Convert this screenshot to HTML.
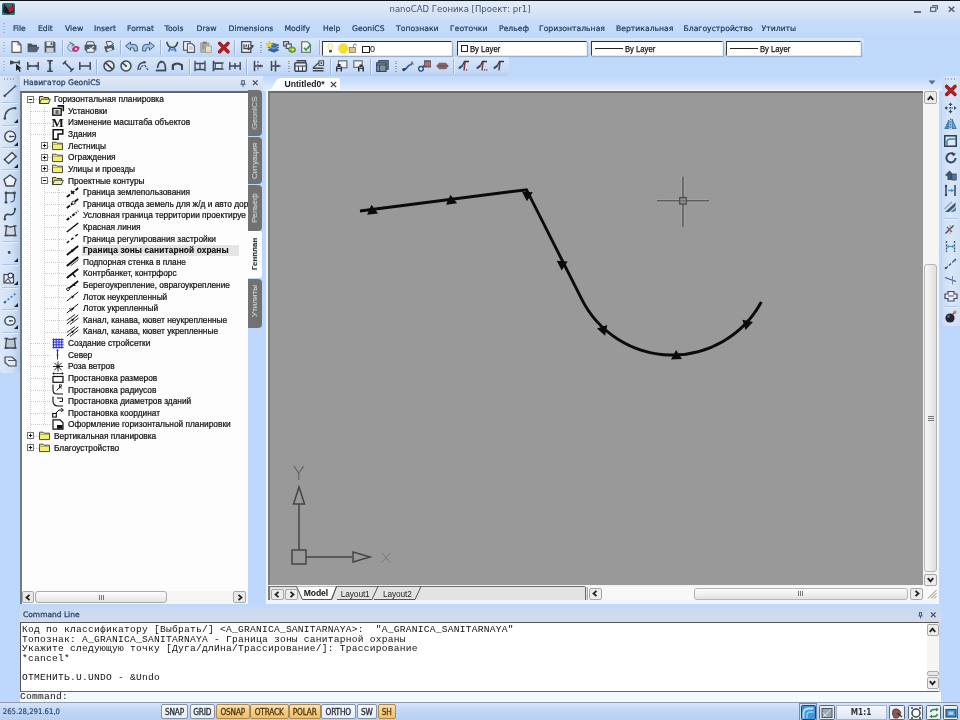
<!DOCTYPE html><html><head><meta charset="utf-8"><title>nanoCAD Геоника</title><style>
*{box-sizing:border-box;margin:0;padding:0}
html,body{width:960px;height:720px;overflow:hidden}
body{background:#bdd8fc;font-family:"Liberation Sans","DejaVu Sans",sans-serif;position:relative;color:#1a2a44}
.a{position:absolute}
.t{position:absolute;white-space:nowrap;line-height:1;filter:blur(0.3px)}
.u{font-family:'DejaVu Sans Condensed','Liberation Sans',sans-serif}
.w{font-family:'DejaVu Sans','Liberation Sans',sans-serif}
.m{font-family:'Liberation Mono','DejaVu Sans Mono',monospace;white-space:pre}
svg{position:absolute;overflow:visible}
</style></head><body>
<div class="a" style="left:0px;top:0px;width:960px;height:1.3px;background:#10131c"></div>
<div class="a" style="left:0px;top:1.3px;width:960px;height:18px;background:linear-gradient(#e3ecf8,#d8e5f6 55%,#cfdff6)"></div>
<div class="a" style="left:0px;top:19px;width:960px;height:72px;background:linear-gradient(#bfd9fb 0 79%,#c6dcfb 84%,#e4eefc)"></div>
<div class="a" style="left:0px;top:19px;width:960px;height:19px;background:linear-gradient(#c8dcf9,#c0d9fa)"></div>
<div class="a" style="left:0px;top:38px;width:864px;height:19px;background:linear-gradient(#dbe7f8,#c9ddf8 70%,#bdd5f4);border-radius:0 3px 3px 0"></div>
<div class="a" style="left:0px;top:57px;width:509px;height:19px;background:linear-gradient(#d9e6f8,#c6dbf7 70%,#b6cff0);border-radius:0 3px 3px 0"></div>
<div class="t w" style="left:389.5px;top:5px;font-size:8.52px;color:#44546e;">nanoCAD Геоника [Проект: pr1]</div>
<svg style="left:1.5px;top:2.5px;" width="12" height="11.5" viewBox="0 0 12 11.5"><rect x="0" y="0" width="13" height="12" rx="1.5" fill="#2f6f78"/><path d="M2 1 L7 7 L11 1 L12 9 L6 11 L1 9Z" fill="#1a1a2a"/><path d="M5.5 4 L11 3 L11 8 L7 9.5Z" fill="#b5202c"/></svg>
<div class="a" style="left:914px;top:10.5px;width:7px;height:2px;background:#5f6f88"></div>
<svg style="left:930px;top:5px;" width="8" height="7" viewBox="0 0 8 7"><path d="M2 0.6H7.4V4.5" fill="none" stroke="#5b6a82" stroke-width="1.3"/><rect x="0.6" y="2.4" width="5.2" height="4" fill="none" stroke="#5b6a82" stroke-width="1.2"/></svg>
<svg style="left:947.5px;top:6px;" width="7" height="6.5" viewBox="0 0 7 6.5"><path d="M0.7 0.7L6.3 5.8M6.3 0.7L0.7 5.8" stroke="#4e5c74" stroke-width="1.5"/></svg>
<div class="t w" style="left:13px;top:25.4px;font-size:7.68px;color:#1f3358;-webkit-text-stroke:0.2px #1f3358">File</div>
<div class="t w" style="left:38px;top:25.4px;font-size:7.68px;color:#1f3358;-webkit-text-stroke:0.2px #1f3358">Edit</div>
<div class="t w" style="left:65px;top:25.4px;font-size:7.68px;color:#1f3358;-webkit-text-stroke:0.2px #1f3358">View</div>
<div class="t w" style="left:94px;top:25.4px;font-size:7.68px;color:#1f3358;-webkit-text-stroke:0.2px #1f3358">Insert</div>
<div class="t w" style="left:127px;top:25.4px;font-size:7.68px;color:#1f3358;-webkit-text-stroke:0.2px #1f3358">Format</div>
<div class="t w" style="left:164.5px;top:25.4px;font-size:7.68px;color:#1f3358;-webkit-text-stroke:0.2px #1f3358">Tools</div>
<div class="t w" style="left:196.5px;top:25.4px;font-size:7.68px;color:#1f3358;-webkit-text-stroke:0.2px #1f3358">Draw</div>
<div class="t w" style="left:228.5px;top:25.4px;font-size:7.68px;color:#1f3358;-webkit-text-stroke:0.2px #1f3358">Dimensions</div>
<div class="t w" style="left:284.5px;top:25.4px;font-size:7.68px;color:#1f3358;-webkit-text-stroke:0.2px #1f3358">Modify</div>
<div class="t w" style="left:323px;top:25.4px;font-size:7.68px;color:#1f3358;-webkit-text-stroke:0.2px #1f3358">Help</div>
<div class="t w" style="left:352px;top:25.4px;font-size:7.68px;color:#1f3358;-webkit-text-stroke:0.2px #1f3358">GeoniCS</div>
<div class="t w" style="left:396px;top:25.4px;font-size:7.68px;color:#1f3358;-webkit-text-stroke:0.2px #1f3358">Топознаки</div>
<div class="t w" style="left:450px;top:25.4px;font-size:7.68px;color:#1f3358;-webkit-text-stroke:0.2px #1f3358">Геоточки</div>
<div class="t w" style="left:499px;top:25.4px;font-size:7.68px;color:#1f3358;-webkit-text-stroke:0.2px #1f3358">Рельеф</div>
<div class="t w" style="left:539px;top:25.4px;font-size:7.68px;color:#1f3358;-webkit-text-stroke:0.2px #1f3358">Горизонтальная</div>
<div class="t w" style="left:616px;top:25.4px;font-size:7.68px;color:#1f3358;-webkit-text-stroke:0.2px #1f3358">Вертикальная</div>
<div class="t w" style="left:683.5px;top:25.4px;font-size:7.68px;color:#1f3358;-webkit-text-stroke:0.2px #1f3358">Благоустройство</div>
<div class="t w" style="left:761.5px;top:25.4px;font-size:7.68px;color:#1f3358;-webkit-text-stroke:0.2px #1f3358">Утилиты</div>
<div class="a" style="left:3px;top:23px;width:2px;height:12px;background:repeating-linear-gradient(#a3b9da 0 1px,transparent 1px 3px)"></div>
<div class="a" style="left:3px;top:42px;width:2px;height:12px;background:repeating-linear-gradient(#a3b9da 0 1px,transparent 1px 3px)"></div>
<div class="a" style="left:3px;top:61px;width:2px;height:12px;background:repeating-linear-gradient(#a3b9da 0 1px,transparent 1px 3px)"></div>
<svg style="left:10.5px;top:40.9px;" width="12" height="12" viewBox="0 0 12 12"><path d="M1 0.7H7L10 3.8V11.3H1Z" fill="#fbfbf8" stroke="#555a60" stroke-width="1.2"/><path d="M7 0.7V3.8H10" fill="none" stroke="#555a60" stroke-width="1"/></svg>
<svg style="left:27px;top:40.9px;" width="12" height="12" viewBox="0 0 12 12"><path d="M0.6 2.5H4.5L5.5 3.8H10V6H3.2L0.6 10.5Z" fill="#4a525c"/><path d="M3.4 6.2H12L9.6 10.8H0.8Z" fill="#59626d" stroke="#3d444d" stroke-width="0.6"/></svg>
<svg style="left:44px;top:40.9px;" width="12" height="12" viewBox="0 0 12 12"><path d="M0.6 0.6H10.2L11.4 1.8V11.4H0.6Z" fill="#525a64"/><rect x="2.6" y="0.9" width="6.2" height="4" fill="#e8edf3"/><rect x="6.6" y="1.3" width="1.5" height="2.8" fill="#525a64"/><rect x="2.4" y="6.8" width="7.2" height="4.6" fill="#c9d0d8"/></svg>
<div class="a" style="left:61.5px;top:40px;width:1px;height:15px;background:#9fb4d2;box-shadow:1px 0 0 #e8f0fb"></div>
<svg style="left:67px;top:40.9px;" width="13" height="12" viewBox="0 0 13 12"><circle cx="4.5" cy="6.5" r="3.8" fill="#bcd9ee" stroke="#6d8aa6" stroke-width="0.8"/><path d="M2.5 1L6.5 3.5L5 5.5" stroke="#555" stroke-width="1" fill="none"/><path d="M5 7.5Q8 3.5 12.5 6Q12.5 11 7.5 11Q5 10.5 5 7.5Z" fill="#c0357a"/><circle cx="9" cy="8" r="1.3" fill="#f3b7d2"/></svg>
<svg style="left:84px;top:40.9px;" width="13" height="12" viewBox="0 0 13 12"><path d="M3 0.8H9.5L10.5 4H2Z" fill="#f4f4f4" stroke="#4a525c" stroke-width="1"/><path d="M0.6 4H12.4V9.5H0.6Z" fill="#4f5761"/><path d="M2.8 7.5H10.2V11.3H2.8Z" fill="#eef0f3" stroke="#4a525c" stroke-width="0.9"/><path d="M5.5 6.5L7 8L10 5" stroke="#dfe6ee" stroke-width="1.1" fill="none"/></svg>
<svg style="left:103px;top:40.9px;" width="12" height="12" viewBox="0 0 12 12"><path d="M3 0.8L8 0.3L10.5 3L5 6Z" fill="#e9edf2" stroke="#4a525c" stroke-width="1"/><path d="M1 5.5L10.5 4L11.5 8.5L3 11.5Z" fill="#4f5761"/><path d="M3.5 8L8.5 6.8L9 9L5 10.5Z" fill="#dfe4ea"/></svg>
<div class="a" style="left:119.5px;top:40px;width:1px;height:15px;background:#9fb4d2;box-shadow:1px 0 0 #e8f0fb"></div>
<svg style="left:125px;top:40.9px;" width="13" height="12" viewBox="0 0 13 12"><path d="M0.6 5L5.5 1V3.4H9Q12.4 3.4 12.4 7V10H9V8.2Q9 6.8 7.6 6.8H5.5V9.2Z" fill="#9fc6e6" stroke="#3f5f7e" stroke-width="1"/></svg>
<svg style="left:142px;top:40.9px;" width="13" height="12" viewBox="0 0 13 12"><path d="M12.4 5L7.5 1V3.4H4Q0.6 3.4 0.6 7V10H4V8.2Q4 6.8 5.4 6.8H7.5V9.2Z" fill="#9fc6e6" stroke="#3f5f7e" stroke-width="1"/></svg>
<div class="a" style="left:159.5px;top:40px;width:1px;height:15px;background:#9fb4d2;box-shadow:1px 0 0 #e8f0fb"></div>
<svg style="left:165.5px;top:40.9px;" width="13" height="12" viewBox="0 0 13 12"><path d="M0.8 0.8Q2 6.5 6.2 6.5Q10.5 6.5 11.7 0.8" fill="none" stroke="#3d4550" stroke-width="1.6"/><path d="M4.5 6.5L2.5 10.5M8 6.5L10 10.5" stroke="#3a7fb8" stroke-width="1.7"/><path d="M4.5 8.8H8" stroke="#3a7fb8" stroke-width="1.2"/></svg>
<svg style="left:183px;top:40.9px;" width="12" height="12" viewBox="0 0 12 12"><rect x="0.6" y="0.6" width="6.6" height="8.6" fill="#f6f6f4" stroke="#4d545e" stroke-width="1.1"/><path d="M4.4 2.8H9.2L11.4 5V11.4H4.4Z" fill="#f6f6f4" stroke="#4d545e" stroke-width="1.1"/><path d="M6 6H9.8M6 8H9.8" stroke="#8b929b" stroke-width="0.8"/></svg>
<svg style="left:200px;top:40.9px;" width="12" height="12" viewBox="0 0 12 12"><rect x="0.8" y="2" width="8" height="9.2" fill="#b5b5aa" stroke="#92928a" stroke-width="0.8"/><rect x="2.8" y="0.6" width="4" height="2.6" fill="#85857d"/><path d="M5.5 5H11.4V11.4H5.5Z" fill="#e0dfcf" stroke="#9a998a" stroke-width="0.8"/><path d="M2.2 5H4.5M2.2 7H4.5" stroke="#6e6e66" stroke-width="0.9"/></svg>
<svg style="left:217.5px;top:41.5px;" width="12" height="11" viewBox="0 0 12 11"><path d="M1.6 1.4L10 9.8M10 1.4L1.6 9.8" stroke="#7a1010" stroke-width="3.4" stroke-linecap="round"/><path d="M1.6 1.4L10 9.8M10 1.4L1.6 9.8" stroke="#c41c1c" stroke-width="2.2" stroke-linecap="round"/></svg>
<div class="a" style="left:233.5px;top:40px;width:1px;height:15px;background:#9fb4d2;box-shadow:1px 0 0 #e8f0fb"></div>
<svg style="left:240.5px;top:40.9px;" width="13" height="12" viewBox="0 0 13 12"><path d="M0.7 0.7H9.8V4.5L12 5L9.8 8V11.3H0.7Z" fill="#f2f3f5" stroke="#454c56" stroke-width="1.3"/><path d="M3 3.2V7.5H7.5V3.2M5.2 3.2V6" stroke="#454c56" stroke-width="1.3" fill="none"/><path d="M7 9L12 4.6" stroke="#454c56" stroke-width="1.6"/></svg>
<div class="a" style="left:260px;top:42px;width:1.5px;height:12px;background:repeating-linear-gradient(#8fa5c4 0 1px,transparent 1px 2.5px)"></div>
<svg style="left:265.5px;top:40.9px;" width="14" height="12" viewBox="0 0 14 12"><path d="M2 9L7 7.2L13 9L8 11.3Z" fill="#2f62b8" stroke="#234a8e" stroke-width="0.6"/><path d="M2 6.5L7 4.7L13 6.5L8 8.8Z" fill="#6fa0e0" stroke="#234a8e" stroke-width="0.6"/><path d="M2 4L7 2.2L13 4L8 6.3Z" fill="#3f76c8" stroke="#234a8e" stroke-width="0.6"/><path d="M3.5 0.2L4.6 2.6L7 3L5 4.4L5.4 7L3.5 5.6L1.4 7L2 4.4L0 3L2.5 2.6Z" fill="#f3dc3a" stroke="#b89a1a" stroke-width="0.4"/></svg>
<svg style="left:283px;top:40.9px;" width="13" height="12" viewBox="0 0 13 12"><rect x="0.6" y="0.6" width="5" height="4.4" fill="#dfe6ee" stroke="#3f4853" stroke-width="1.1"/><rect x="3.2" y="3" width="5" height="4.4" fill="#dfe6ee" stroke="#3f4853" stroke-width="1.1"/><path d="M5.5 8.2Q5.5 6 9 6Q12.6 6 12.6 8.8Q12.6 11.4 9 11.4Q5.5 11.4 5.5 8.2Z" fill="#7fae3a" stroke="#4d7520" stroke-width="0.7"/><path d="M7.5 8.6H10.5M9.3 7.3L10.8 8.6L9.3 9.9" stroke="#f0e86a" stroke-width="1" fill="none"/></svg>
<svg style="left:300.5px;top:40.9px;" width="11" height="12" viewBox="0 0 11 12"><path d="M0.7 0.7H6.4L9.3 3.6V11.3H0.7Z" fill="#f2f4f6" stroke="#59616b" stroke-width="1.1"/><path d="M3 6.8L5 9L9.8 3.6" fill="none" stroke="#2f9a4a" stroke-width="1.7"/></svg>
<div class="a" style="left:318.5px;top:40px;width:1px;height:15px;background:#9fb4d2;box-shadow:1px 0 0 #e8f0fb"></div>
<div class="a" style="left:322px;top:40.5px;width:130px;height:15.5px;background:#fff;border-top:1.6px solid #2c2c2c;border-left:1.8px solid #3a3a3a;border-bottom:1px solid #dfe6f0;border-right:1px solid #e6edf6;box-shadow:1px 1px 1px rgba(120,140,170,.5)"></div>
<div class="a" style="left:456.5px;top:40.5px;width:130.5px;height:15.5px;background:#fff;border-top:1.6px solid #2c2c2c;border-left:1.8px solid #3a3a3a;border-bottom:1px solid #dfe6f0;border-right:1px solid #e6edf6;box-shadow:1px 1px 1px rgba(120,140,170,.5)"></div>
<div class="a" style="left:591px;top:40.5px;width:131.5px;height:15.5px;background:#fff;border-top:1.6px solid #2c2c2c;border-left:1.8px solid #3a3a3a;border-bottom:1px solid #dfe6f0;border-right:1px solid #e6edf6;box-shadow:1px 1px 1px rgba(120,140,170,.5)"></div>
<div class="a" style="left:726px;top:40.5px;width:135px;height:15.5px;background:#fff;border-top:1.6px solid #2c2c2c;border-left:1.8px solid #3a3a3a;border-bottom:1px solid #dfe6f0;border-right:1px solid #e6edf6;box-shadow:1px 1px 1px rgba(120,140,170,.5)"></div>
<svg style="left:327.3px;top:43px;" width="8" height="12" viewBox="0 0 8 12"><path d="M3.5 0.5Q0.3 0.8 0.8 4Q1.2 5.8 2.2 6.8H4.8Q5.8 5.8 6.2 4Q6.7 0.8 3.5 0.5Z" fill="#fbf6c8" stroke="#d8cf8a" stroke-width="0.5"/><rect x="2" y="7" width="3" height="2.4" fill="#555"/></svg>
<svg style="left:338px;top:43px;" width="11" height="11" viewBox="0 0 11 11"><circle cx="5.2" cy="5.5" r="4.2" fill="#f5e02a" stroke="#e8c81a" stroke-width="0.8"/><circle cx="5.2" cy="5.5" r="5.4" fill="none" stroke="#f7ec8a" stroke-width="1"/></svg>
<svg style="left:349px;top:43px;" width="9" height="11" viewBox="0 0 9 11"><rect x="0.5" y="4.6" width="6" height="5" fill="#d9c79a" stroke="#7a6a48" stroke-width="0.7"/><path d="M4.5 4.6V2.5Q4.5 1 6 1Q7.5 1 7.5 2.5" fill="none" stroke="#6a6a6a" stroke-width="0.9"/></svg>
<div class="a" style="left:361.5px;top:45.5px;width:8px;height:7px;border:1.3px solid #222;background:#fff"></div>
<div class="t" style="left:370px;top:44.5px;font-size:9px;color:#111;">0</div>
<div class="a" style="left:460.7px;top:45px;width:7px;height:7px;border:1.2px solid #222;background:#fff"></div>
<div class="t" style="left:469.5px;top:44.6px;font-size:8.5px;color:#111;transform:scaleX(0.9);transform-origin:0 0;-webkit-text-stroke:0.25px #111">By Layer</div>
<div class="a" style="left:594.5px;top:47.9px;width:28px;height:1.3px;background:#222"></div>
<div class="t" style="left:624.5px;top:44.6px;font-size:8.5px;color:#111;transform:scaleX(0.9);transform-origin:0 0;-webkit-text-stroke:0.25px #111">By Layer</div>
<div class="a" style="left:730px;top:47.9px;width:28px;height:1.3px;background:#222"></div>
<div class="t" style="left:760px;top:44.6px;font-size:8.5px;color:#111;transform:scaleX(0.9);transform-origin:0 0;-webkit-text-stroke:0.25px #111">By Layer</div>
<svg style="left:9.5px;top:59.6px;" width="13" height="12" viewBox="0 0 13 12"><path d="M0.5 2.5H9.5M0.8 0.5V4.5M9.2 0.5V4.5" stroke="#3f4852" stroke-width="1.5"/><path d="M6 4L6 11L8 9.2L9.5 12L10.8 11.3L9.4 8.6L12 8.4Z" fill="#1e242c"/><rect x="0.3" y="1" width="3.2" height="3" fill="#3f4852"/></svg>
<svg style="left:27px;top:59.6px;" width="12" height="12" viewBox="0 0 12 12"><path d="M0.8 2V10M11.2 2V10M0.8 6H11.2" stroke="#3f4852" stroke-width="1.5"/><path d="M0.8 6L3.3 4.5V7.5ZM11.2 6L8.7 4.5V7.5Z" fill="#3f4852"/></svg>
<svg style="left:46px;top:59.6px;" width="8" height="12" viewBox="0 0 8 12"><path d="M1.2 0.8H6.8M1.2 11.2H6.8M4 0.8V11.2" stroke="#3f4852" stroke-width="1.6"/><path d="M4 1L2.4 3.6H5.6ZM4 11L2.4 8.4H5.6Z" fill="#3f4852"/></svg>
<svg style="left:62px;top:59.6px;" width="12" height="12" viewBox="0 0 12 12"><path d="M2.5 2.5L10 10" stroke="#3f4852" stroke-width="1.7"/><path d="M0.8 4.2L4.2 0.8M8.3 11.7L11.7 8.3" stroke="#3f4852" stroke-width="1.5"/></svg>
<svg style="left:79px;top:59.6px;" width="12" height="12" viewBox="0 0 12 12"><path d="M0.8 2V10M11.2 2V10M0.8 6H11.2" stroke="#3f4852" stroke-width="1.5"/></svg>
<div class="a" style="left:96px;top:59px;width:1px;height:15px;background:#9fb4d2;box-shadow:1px 0 0 #e8f0fb"></div>
<svg style="left:102.5px;top:59.6px;" width="12" height="12" viewBox="0 0 12 12"><circle cx="6" cy="6" r="5" fill="#e3ecf6" stroke="#3f4852" stroke-width="1.6"/><path d="M2.4 2.6L9.6 9.4" stroke="#3f4852" stroke-width="1.8"/></svg>
<svg style="left:119.5px;top:59.6px;" width="12" height="12" viewBox="0 0 12 12"><circle cx="6" cy="6" r="5" fill="#e3ecf6" stroke="#3f4852" stroke-width="1.5"/><path d="M6 6L2.6 2.8" stroke="#3f4852" stroke-width="1.6"/><circle cx="6" cy="6" r="1" fill="#3f4852"/></svg>
<svg style="left:136.5px;top:59.6px;" width="12" height="12" viewBox="0 0 12 12"><path d="M1 10Q1 2 8.5 2.2" fill="none" stroke="#3f4852" stroke-width="1.4"/><path d="M3 10Q3.5 5 8 5.5L11 10" fill="none" stroke="#3f4852" stroke-width="1.2" stroke-dasharray="2.5 1"/><path d="M6.5 0.8L9.5 2.3L6.8 3.8Z" fill="#3f4852"/></svg>
<svg style="left:154.5px;top:59.6px;" width="12" height="12" viewBox="0 0 12 12"><path d="M0.8 10.5H11.2" stroke="#3f4852" stroke-width="1.8"/><path d="M2.5 8Q3.5 1.2 7 1.5Q10.5 2 10.5 10" fill="none" stroke="#3f4852" stroke-width="1.7"/><path d="M5 0.5L8.5 1.8L5.5 3.6Z" fill="#3f4852"/></svg>
<svg style="left:170.5px;top:59.6px;" width="13" height="12" viewBox="0 0 13 12"><path d="M0.8 10V4.5Q6 0.5 12 4.5V10H10V6Q6 3 3 6V10Z" fill="#3f4852"/></svg>
<div class="a" style="left:188.5px;top:59px;width:1px;height:15px;background:#9fb4d2;box-shadow:1px 0 0 #e8f0fb"></div>
<svg style="left:194px;top:59.6px;" width="12" height="12" viewBox="0 0 12 12"><path d="M1 0.8V11.2M11 0.8V11.2M1 3.5H11M1 9.5H11M6 3.5V9.5" stroke="#3f4852" stroke-width="1.3" fill="none"/></svg>
<svg style="left:211.5px;top:59.6px;" width="12" height="12" viewBox="0 0 12 12"><path d="M1.5 0.8V11.2M1.5 3H11.5M1.5 9H11.5" stroke="#3f4852" stroke-width="1.6"/><path d="M3.5 3.5H10V8.5H3.5Z" fill="#dbe6f3" stroke="#3f4852" stroke-width="0.9"/></svg>
<svg style="left:229px;top:59.6px;" width="12" height="12" viewBox="0 0 12 12"><path d="M0.8 2V10M11.2 2V10M6 3V9M0.8 6H11.2" stroke="#3f4852" stroke-width="1.4"/></svg>
<div class="a" style="left:246px;top:59px;width:1px;height:15px;background:#9fb4d2;box-shadow:1px 0 0 #e8f0fb"></div>
<svg style="left:252px;top:59.6px;" width="12" height="12" viewBox="0 0 12 12"><path d="M2.5 0.8V11.2" stroke="#3f4852" stroke-width="1.5"/><path d="M6 1V11" stroke="#3f4852" stroke-width="1" stroke-dasharray="2 1.2"/><path d="M2.5 6H11" stroke="#3f4852" stroke-width="1.4"/><path d="M6.5 6L9.2 4.3V7.7Z" fill="#3f4852"/></svg>
<svg style="left:269px;top:59.6px;" width="12" height="12" viewBox="0 0 12 12"><path d="M2.5 1V11M6.5 0.5V11.5" stroke="#3f4852" stroke-width="1.5"/><path d="M2.5 6H11.5" stroke="#3f4852" stroke-width="1.4"/><path d="M7 6L9.5 4.4V7.6Z" fill="#3f4852"/></svg>
<div class="a" style="left:288px;top:61px;width:1.5px;height:12px;background:repeating-linear-gradient(#8fa5c4 0 1px,transparent 1px 2.5px)"></div>
<svg style="left:294px;top:59.6px;" width="13" height="12" viewBox="0 0 13 12"><rect x="0.8" y="2.8" width="11.6" height="8.4" rx="1.2" fill="#e2eaf4" stroke="#3f4852" stroke-width="1.5"/><path d="M2.5 0.8H11.5V2.5" stroke="#3f4852" stroke-width="1.4" fill="none"/><path d="M0.8 6H12.4M4.5 6V11M8.5 6V11" stroke="#3f4852" stroke-width="1"/></svg>
<svg style="left:312px;top:59.6px;" width="12" height="12" viewBox="0 0 12 12"><path d="M0.8 10.8H11.6M0.8 8.2H11.6" stroke="#3f4852" stroke-width="1.4"/><path d="M1 8L8 1.5" stroke="#3f4852" stroke-width="1.2"/><rect x="7" y="0.8" width="4.6" height="4.6" fill="#dfe8f3" stroke="#3f4852" stroke-width="1"/><circle cx="9.3" cy="3.1" r="1" fill="#3f4852"/></svg>
<div class="a" style="left:330px;top:59px;width:1px;height:15px;background:#9fb4d2;box-shadow:1px 0 0 #e8f0fb"></div>
<svg style="left:335px;top:59.6px;" width="13" height="12" viewBox="0 0 13 12"><rect x="3.5" y="0.8" width="8.4" height="7" fill="#eef2f8" stroke="#59626d" stroke-width="1.1"/><path d="M2.5 4H5.5V6.5H7V11.5H5.5V9H2.5V11.5H1V6.5H2.5Z" fill="#2e3339"/><path d="M2.2 7.5H5.8" stroke="#d8c84a" stroke-width="1"/></svg>
<svg style="left:352.5px;top:59.6px;" width="13" height="12" viewBox="0 0 13 12"><rect x="0.8" y="0.8" width="8.4" height="6.5" fill="#eef2f8" stroke="#59626d" stroke-width="1.1"/><path d="M6.5 4.5H9.5V6.5H11V11.5H9.5V9H6.5V11.5H5V6.5H6.5Z" fill="#2e3339"/><path d="M6.2 7.6H9.8" stroke="#d8c84a" stroke-width="1"/></svg>
<div class="a" style="left:370px;top:59px;width:1px;height:15px;background:#9fb4d2;box-shadow:1px 0 0 #e8f0fb"></div>
<svg style="left:375.5px;top:59.6px;" width="13" height="12" viewBox="0 0 13 12"><rect x="2.8" y="0.6" width="9.4" height="8.6" fill="#6f86a6" stroke="#2f3f58" stroke-width="1"/><rect x="0.7" y="2.8" width="9.4" height="8.6" fill="#7e93b0" stroke="#2f3f58" stroke-width="1.1"/><path d="M0.7 5H10M3.5 5V11.4" stroke="#2f3f58" stroke-width="0.9"/><rect x="5" y="6.5" width="4" height="3.5" fill="#8f9a5a"/></svg>
<div class="a" style="left:395px;top:61px;width:1.5px;height:12px;background:repeating-linear-gradient(#8fa5c4 0 1px,transparent 1px 2.5px)"></div>
<svg style="left:401.5px;top:59.6px;" width="13" height="12" viewBox="0 0 13 12"><path d="M1.5 9.5Q4 9.5 5.5 7Q7 4.5 10 4.5" fill="none" stroke="#2f5f9a" stroke-width="1.7"/><circle cx="1.8" cy="9.6" r="1.6" fill="#2a3f5e"/><path d="M10 0.8L12 4.6H8Z" fill="#8a6a78"/></svg>
<svg style="left:418px;top:59.6px;" width="13" height="12" viewBox="0 0 13 12"><circle cx="3" cy="8.8" r="2.3" fill="#eef3fa" stroke="#2a4a8a" stroke-width="1.4"/><path d="M4.5 7L7 4.5" stroke="#2a4a8a" stroke-width="1.3"/><rect x="6.5" y="0.8" width="6" height="6.2" fill="#8a5a62" stroke="#5a3a44" stroke-width="0.8"/><path d="M6.5 3H12.5M6.5 5H12.5" stroke="#c8a8ae" stroke-width="0.7"/></svg>
<svg style="left:435.5px;top:59.6px;" width="13" height="12" viewBox="0 0 13 12"><path d="M0.5 6L3 2.8H10L12.5 6L10 9.2H3Z" fill="#8a6468"/><path d="M0.5 6H12.5" stroke="#6a484e" stroke-width="0.8"/></svg>
<div class="a" style="left:453px;top:59px;width:1px;height:15px;background:#9fb4d2;box-shadow:1px 0 0 #e8f0fb"></div>
<svg style="left:458px;top:59.6px;" width="13" height="12" viewBox="0 0 13 12"><path d="M0.8 8.5L4.5 5.5" stroke="#2a4a7a" stroke-width="2.2"/><path d="M4.5 5.5L6.5 1.5H11" stroke="#333" stroke-width="1.3" fill="none"/><path d="M7 1.8L6 10.5" stroke="#7a3a3a" stroke-width="1.5"/><circle cx="8.6" cy="10" r="0.8" fill="#7a3a3a"/></svg>
<svg style="left:475.5px;top:59.6px;" width="13" height="12" viewBox="0 0 13 12"><path d="M0.8 8.5L4.5 5.5" stroke="#2a4a7a" stroke-width="2.2"/><path d="M4.5 5.5L6.5 1.5H11" stroke="#333" stroke-width="1.3" fill="none"/><path d="M7 1.8L6 10.5" stroke="#7a3a3a" stroke-width="1.5"/><circle cx="8.6" cy="10" r="0.8" fill="#7a3a3a"/><circle cx="10.8" cy="10" r="0.8" fill="#7a3a3a"/></svg>
<svg style="left:493px;top:59.6px;" width="13" height="12" viewBox="0 0 13 12"><path d="M0.8 8.5L4.5 5.5" stroke="#2a4a7a" stroke-width="2.2"/><path d="M4.5 5.5L6.5 1.5H11" stroke="#333" stroke-width="1.3" fill="none"/><path d="M7 1.8L6 10.5" stroke="#7a3a3a" stroke-width="1.5"/></svg>
<div class="a" style="left:0px;top:76px;width:20px;height:297px;background:linear-gradient(90deg,#dce8f8,#cfe0f6 60%,#b4cbea);border-radius:0 0 3px 3px"></div>
<div class="a" style="left:4px;top:78px;width:12px;height:2px;background:repeating-linear-gradient(90deg,#8fa9cf 0 1px,transparent 1px 3px)"></div>
<svg style="left:3px;top:84px;" width="14" height="14" viewBox="0 0 14 14"><path d="M1.5 12L12.5 2" stroke="#3f4852" stroke-width="1.3"/><circle cx="1.8" cy="11.8" r="1.3" fill="#3f4852"/><circle cx="12.2" cy="2.2" r="1.3" fill="#5a7aa8"/></svg>
<div class="a" style="left:2px;top:102px;width:16px;height:1px;background:#aec4e2;box-shadow:0 1px 0 #e6effb"></div>
<svg style="left:3px;top:106px;" width="14" height="15" viewBox="0 0 14 15"><path d="M1.8 13Q1.8 2.5 12 2" fill="none" stroke="#3f4852" stroke-width="1.5"/><circle cx="1.8" cy="12.5" r="1.3" fill="#3f4852"/><circle cx="12.2" cy="2.2" r="1.2" fill="#3f4852"/></svg>
<svg style="left:14px;top:119px;" width="4" height="4" viewBox="0 0 4 4"><path d="M4 0V4H0Z" fill="#1c222a"/></svg>
<div class="a" style="left:2px;top:124.5px;width:16px;height:1px;background:#aec4e2;box-shadow:0 1px 0 #e6effb"></div>
<svg style="left:4px;top:130px;" width="13" height="13" viewBox="0 0 13 13"><circle cx="6.2" cy="6.5" r="5.4" fill="#e6eef8" stroke="#3f4852" stroke-width="1.4"/><path d="M6.2 6.5H10.5" stroke="#3f4852" stroke-width="1.2"/><circle cx="6.2" cy="6.5" r="1.1" fill="#3f4852"/></svg>
<svg style="left:14px;top:142px;" width="4" height="4" viewBox="0 0 4 4"><path d="M4 0V4H0Z" fill="#1c222a"/></svg>
<div class="a" style="left:2px;top:146.5px;width:16px;height:1px;background:#aec4e2;box-shadow:0 1px 0 #e6effb"></div>
<svg style="left:3px;top:151px;" width="14" height="14" viewBox="0 0 14 14"><path d="M1.5 8.5L9 1.5L13 5.5L5.5 12.5Z" fill="#e8eff9" stroke="#3f4852" stroke-width="1.3"/><circle cx="1.8" cy="8.5" r="1.1" fill="#3f4852"/><circle cx="12.8" cy="5.5" r="1.1" fill="#3f4852"/></svg>
<svg style="left:14px;top:164px;" width="4" height="4" viewBox="0 0 4 4"><path d="M4 0V4H0Z" fill="#1c222a"/></svg>
<div class="a" style="left:2px;top:169px;width:16px;height:1px;background:#aec4e2;box-shadow:0 1px 0 #e6effb"></div>
<svg style="left:3px;top:174px;" width="14" height="13" viewBox="0 0 14 13"><path d="M7 1L13 5.5L10.8 12H3.2L1 5.5Z" fill="#eef3fa" stroke="#3f4852" stroke-width="1.4"/></svg>
<svg style="left:3px;top:190px;" width="14" height="14" viewBox="0 0 14 14"><path d="M3 13V3H11.5V8" fill="none" stroke="#3f4852" stroke-width="1.4"/><circle cx="3" cy="3" r="1.4" fill="#3f4852"/><circle cx="11.5" cy="3" r="1.4" fill="#3f4852"/><circle cx="3" cy="12.3" r="1.4" fill="#3f4852"/><path d="M11.5 8Q11.5 12 7.5 12" fill="none" stroke="#4a6a9a" stroke-width="1.3"/></svg>
<svg style="left:3px;top:207px;" width="14" height="14" viewBox="0 0 14 14"><path d="M1.8 12.5Q1 6.5 6 7.5Q11.5 9 12 2" fill="none" stroke="#3f4852" stroke-width="1.6"/><circle cx="1.8" cy="12.2" r="1.2" fill="#3f4852"/><circle cx="12" cy="2" r="1.2" fill="#3f4852"/></svg>
<svg style="left:4px;top:224px;" width="13" height="13" viewBox="0 0 13 13"><path d="M1.5 11.5L2.5 2Q6.5 4 10.5 2L11.5 11.5Z" fill="#cfdae8" stroke="#3f4852" stroke-width="1.3"/><path d="M0.5 2H3.5M9.5 2H12.5M0.5 11.5H3.5M9.5 11.5H12.5" stroke="#3f4852" stroke-width="1.5"/></svg>
<div class="a" style="left:2px;top:241px;width:16px;height:1px;background:#aec4e2;box-shadow:0 1px 0 #e6effb"></div>
<svg style="left:7px;top:250px;" width="5" height="5" viewBox="0 0 5 5"><circle cx="2.2" cy="2.5" r="1.4" fill="#3f4852"/></svg>
<svg style="left:14px;top:258px;" width="4" height="4" viewBox="0 0 4 4"><path d="M4 0V4H0Z" fill="#1c222a"/></svg>
<div class="a" style="left:2px;top:264px;width:16px;height:1px;background:#aec4e2;box-shadow:0 1px 0 #e6effb"></div>
<svg style="left:3px;top:272px;" width="14" height="12" viewBox="0 0 14 12"><rect x="1" y="2.5" width="9.5" height="8.5" fill="#e6edf7" stroke="#3f4852" stroke-width="1.2"/><circle cx="7.5" cy="3.5" r="2.4" fill="#f3f6fb" stroke="#3f4852" stroke-width="1.1"/><path d="M1.5 10.5L5 6.5L8 10.5" fill="none" stroke="#3f4852" stroke-width="1.1"/></svg>
<svg style="left:14px;top:281px;" width="4" height="4" viewBox="0 0 4 4"><path d="M4 0V4H0Z" fill="#1c222a"/></svg>
<div class="a" style="left:2px;top:287px;width:16px;height:1px;background:#aec4e2;box-shadow:0 1px 0 #e6effb"></div>
<svg style="left:3px;top:292px;" width="14" height="12" viewBox="0 0 14 12"><path d="M1.5 10.5L12.5 1.5" stroke="#3f7fc0" stroke-width="1.6" stroke-dasharray="2.2 1.8"/><circle cx="1.8" cy="10.3" r="1.1" fill="#3f4852"/></svg>
<svg style="left:14px;top:303px;" width="4" height="4" viewBox="0 0 4 4"><path d="M4 0V4H0Z" fill="#1c222a"/></svg>
<div class="a" style="left:2px;top:309px;width:16px;height:1px;background:#aec4e2;box-shadow:0 1px 0 #e6effb"></div>
<svg style="left:4px;top:315px;" width="13" height="11" viewBox="0 0 13 11"><ellipse cx="6" cy="5.8" rx="5.2" ry="4.3" fill="#e6eef8" stroke="#3f4852" stroke-width="1.4"/><path d="M6 5.8H9" stroke="#3f4852" stroke-width="1.1"/><circle cx="6" cy="5.8" r="1" fill="#3f4852"/></svg>
<svg style="left:14px;top:325px;" width="4" height="4" viewBox="0 0 4 4"><path d="M4 0V4H0Z" fill="#1c222a"/></svg>
<div class="a" style="left:2px;top:331.5px;width:16px;height:1px;background:#aec4e2;box-shadow:0 1px 0 #e6effb"></div>
<svg style="left:4px;top:337px;" width="13" height="12" viewBox="0 0 13 12"><path d="M1.5 11L2.5 1.5Q6.5 3.2 10.5 1.5L11.5 11Z" fill="#b9c6d6" stroke="#3f4852" stroke-width="1.3"/><path d="M0.5 1.5H3.5M9.5 1.5H12.5M0.5 11H3.5M9.5 11H12.5" stroke="#3f4852" stroke-width="1.4"/></svg>
<svg style="left:4px;top:356px;" width="13" height="11" viewBox="0 0 13 11"><path d="M1 1H8L12 4.5V10H5L1 6.5Z" fill="#e3eaf4" stroke="#3f4852" stroke-width="1.2"/><path d="M4 4.5H11.5" stroke="#3f4852" stroke-width="0.9"/></svg>
<div class="a" style="left:20px;top:76px;width:243px;height:15px;background:linear-gradient(#dfe9f7,#cfdff5)"></div>
<div class="t w" style="left:23.3px;top:79.2px;font-size:7.6px;color:#2c4874;-webkit-text-stroke:0.3px #2c4874">Навигатор GeoniCS</div>
<svg style="left:239.5px;top:79.5px;" width="6" height="7" viewBox="0 0 7 8"><path d="M1.5 0.8H5.5M2 0.8V4.5M5 0.8V4.5M0.5 4.8H6.5M3.5 5V7.8" stroke="#44546e" stroke-width="1.2" fill="none"/></svg>
<svg style="left:252px;top:80px;" width="6.5" height="5.5" viewBox="0 0 8 7"><path d="M1 0.5L7 6.5M7 0.5L1 6.5" stroke="#3a4a66" stroke-width="1.5"/></svg>
<div class="a" style="left:20px;top:91px;width:228px;height:513px;background:#fefdfd;border-top:2px solid #666;border-left:2px solid #707a86"></div>
<div class="a" style="left:22px;top:590.5px;width:226px;height:13px;background:#f6f6f4"></div>
<div class="a" style="left:21.5px;top:591px;width:12.5px;height:12px;background:#e9e9e9;border:1px solid #a8a8a8;border-radius:2px"></div>
<div class="a" style="left:233px;top:591px;width:13px;height:12px;background:#e9e9e9;border:1px solid #a8a8a8;border-radius:2px"></div>
<div class="a" style="left:34.5px;top:591px;width:132.5px;height:12px;background:linear-gradient(#fdfdfd,#e3e3e3);border:1px solid #aaa;border-radius:3px"></div>
<svg style="left:24.5px;top:593.5px;" width="6" height="7" viewBox="0 0 6 7"><path d="M4.5 0.8L1.5 3.5L4.5 6.2" stroke="#222" stroke-width="1.8" fill="none"/></svg>
<svg style="left:236.5px;top:593.5px;" width="6" height="7" viewBox="0 0 6 7"><path d="M1.5 0.8L4.5 3.5L1.5 6.2" stroke="#222" stroke-width="1.8" fill="none"/></svg>
<div class="a" style="left:98.5px;top:594.5px;width:5px;height:5px;background:repeating-linear-gradient(90deg,#777 0 1px,transparent 1px 2px)"></div>
<div class="a" style="left:30px;top:103.3px;width:1px;height:344.29999999999995px;background:repeating-linear-gradient(#cdcdcd 0 1px,transparent 1px 2px)"></div>
<div class="a" style="left:44px;top:106.91px;width:1px;height:317.47px;background:repeating-linear-gradient(#cdcdcd 0 1px,transparent 1px 2px)"></div>
<div class="a" style="left:58px;top:188.18px;width:1px;height:143.32px;background:repeating-linear-gradient(#cdcdcd 0 1px,transparent 1px 2px)"></div>
<div class="a" style="left:22px;top:93px;width:226px;height:497px;overflow:hidden"><div class="a" style="left:-22px;top:-93px;width:960px;height:720px">
<div class="a" style="left:34px;top:99px;width:5px;height:1px;background:repeating-linear-gradient(90deg,#cdcdcd 0 1px,transparent 1px 2px)"></div>
<svg style="left:26.5px;top:95.8px;" width="7" height="7" viewBox="0 0 7 7"><rect x="0.5" y="0.5" width="6" height="6" fill="#fff" stroke="#777" stroke-width="1"/><path d="M1.8 3.5H5.2" stroke="#111" stroke-width="1"/></svg>
<svg style="left:39px;top:94.8px;" width="12" height="9" viewBox="0 0 12 9"><path d="M0.5 1.5H4L5 2.5H9.5V8.5H0.5Z" fill="#e6e06a" stroke="#3a3a2a" stroke-width="1"/><path d="M2.5 4.2H11.3L9.5 8.5H0.5Z" fill="#f4ef9a" stroke="#333" stroke-width="0.9"/></svg>
<div class="t" style="left:54px;top:95.2628px;font-size:8.34px;color:#111;-webkit-text-stroke:0.22px #111">Горизонтальная планировка</div>
<div class="a" style="left:31px;top:111px;width:20px;height:1px;background:repeating-linear-gradient(90deg,#cdcdcd 0 1px,transparent 1px 2px)"></div>
<svg style="left:52px;top:105.41px;" width="12" height="11" viewBox="0 0 12 11"><rect x="0.8" y="3.4" width="8.4" height="6.8" fill="#fff" stroke="#111" stroke-width="1.4"/><path d="M5.5 0.9H11.3V6.2" fill="none" stroke="#111" stroke-width="1.6"/><path d="M2.4 6H7.6M2.4 8H7.6M5 5V9" stroke="#222" stroke-width="0.9"/></svg>
<div class="t" style="left:68px;top:106.8728px;font-size:8.34px;color:#111;-webkit-text-stroke:0.22px #111">Установки</div>
<div class="a" style="left:31px;top:123px;width:20px;height:1px;background:repeating-linear-gradient(90deg,#cdcdcd 0 1px,transparent 1px 2px)"></div>
<div class="t" style="left:51.5px;top:116.02px;font-size:13px;font-weight:bold;font-family:'Liberation Serif',serif;color:#111">M</div>
<div class="t" style="left:68px;top:118.4828px;font-size:8.34px;color:#111;-webkit-text-stroke:0.22px #111">Изменение масштаба объектов</div>
<div class="a" style="left:31px;top:134px;width:20px;height:1px;background:repeating-linear-gradient(90deg,#cdcdcd 0 1px,transparent 1px 2px)"></div>
<svg style="left:52px;top:128.63px;" width="12" height="11" viewBox="0 0 12 11"><path d="M1.2 0.8H10.8V5H6V10.2H1.2Z" fill="#fff" stroke="#111" stroke-width="1.5"/></svg>
<div class="t" style="left:68px;top:130.0928px;font-size:8.34px;color:#111;-webkit-text-stroke:0.22px #111">Здания</div>
<div class="a" style="left:48px;top:146px;width:4px;height:1px;background:repeating-linear-gradient(90deg,#cdcdcd 0 1px,transparent 1px 2px)"></div>
<svg style="left:40.5px;top:142.24px;" width="7" height="7" viewBox="0 0 7 7"><rect x="0.5" y="0.5" width="6" height="6" fill="#fff" stroke="#777" stroke-width="1"/><path d="M1.8 3.5H5.2" stroke="#111" stroke-width="1"/><path d="M3.5 1.8V5.2" stroke="#111" stroke-width="1"/></svg>
<svg style="left:52px;top:141.24px;" width="12" height="9" viewBox="0 0 12 9"><path d="M0.5 1.2H4L5 2.2H10.5V8.6H0.5Z" fill="#f1ee74" stroke="#4a4a3a" stroke-width="1"/><path d="M0.5 3.4H10.5" stroke="#8a8540" stroke-width="0.6"/></svg>
<div class="t" style="left:68px;top:141.70280000000002px;font-size:8.34px;color:#111;-webkit-text-stroke:0.22px #111">Лестницы</div>
<div class="a" style="left:48px;top:157px;width:4px;height:1px;background:repeating-linear-gradient(90deg,#cdcdcd 0 1px,transparent 1px 2px)"></div>
<svg style="left:40.5px;top:153.85px;" width="7" height="7" viewBox="0 0 7 7"><rect x="0.5" y="0.5" width="6" height="6" fill="#fff" stroke="#777" stroke-width="1"/><path d="M1.8 3.5H5.2" stroke="#111" stroke-width="1"/><path d="M3.5 1.8V5.2" stroke="#111" stroke-width="1"/></svg>
<svg style="left:52px;top:152.85px;" width="12" height="9" viewBox="0 0 12 9"><path d="M0.5 1.2H4L5 2.2H10.5V8.6H0.5Z" fill="#f1ee74" stroke="#4a4a3a" stroke-width="1"/><path d="M0.5 3.4H10.5" stroke="#8a8540" stroke-width="0.6"/></svg>
<div class="t" style="left:68px;top:153.3128px;font-size:8.34px;color:#111;-webkit-text-stroke:0.22px #111">Ограждения</div>
<div class="a" style="left:48px;top:169px;width:4px;height:1px;background:repeating-linear-gradient(90deg,#cdcdcd 0 1px,transparent 1px 2px)"></div>
<svg style="left:40.5px;top:165.45999999999998px;" width="7" height="7" viewBox="0 0 7 7"><rect x="0.5" y="0.5" width="6" height="6" fill="#fff" stroke="#777" stroke-width="1"/><path d="M1.8 3.5H5.2" stroke="#111" stroke-width="1"/><path d="M3.5 1.8V5.2" stroke="#111" stroke-width="1"/></svg>
<svg style="left:52px;top:164.45999999999998px;" width="12" height="9" viewBox="0 0 12 9"><path d="M0.5 1.2H4L5 2.2H10.5V8.6H0.5Z" fill="#f1ee74" stroke="#4a4a3a" stroke-width="1"/><path d="M0.5 3.4H10.5" stroke="#8a8540" stroke-width="0.6"/></svg>
<div class="t" style="left:68px;top:164.9228px;font-size:8.34px;color:#111;-webkit-text-stroke:0.22px #111">Улицы и проезды</div>
<div class="a" style="left:48px;top:181px;width:4px;height:1px;background:repeating-linear-gradient(90deg,#cdcdcd 0 1px,transparent 1px 2px)"></div>
<svg style="left:40.5px;top:177.07px;" width="7" height="7" viewBox="0 0 7 7"><rect x="0.5" y="0.5" width="6" height="6" fill="#fff" stroke="#777" stroke-width="1"/><path d="M1.8 3.5H5.2" stroke="#111" stroke-width="1"/></svg>
<svg style="left:52px;top:176.07px;" width="12" height="9" viewBox="0 0 12 9"><path d="M0.5 1.5H4L5 2.5H9.5V8.5H0.5Z" fill="#e6e06a" stroke="#3a3a2a" stroke-width="1"/><path d="M2.5 4.2H11.3L9.5 8.5H0.5Z" fill="#f4ef9a" stroke="#333" stroke-width="0.9"/></svg>
<div class="t" style="left:68px;top:176.5328px;font-size:8.34px;color:#111;-webkit-text-stroke:0.22px #111">Проектные контуры</div>
<div class="a" style="left:45px;top:192px;width:21px;height:1px;background:repeating-linear-gradient(90deg,#cdcdcd 0 1px,transparent 1px 2px)"></div>
<svg style="left:66px;top:186.68px;" width="13" height="11" viewBox="0 0 13 11"><path d="M0.8 10L12.2 1" stroke="#111" stroke-width="1.8" stroke-dasharray="4 1.5"/><path d="M5 3.8L8 7" stroke="#111" stroke-width="1.3"/></svg>
<div class="t" style="left:83px;top:188.14280000000002px;font-size:8.34px;color:#111;-webkit-text-stroke:0.22px #111">Граница землепользования</div>
<div class="a" style="left:45px;top:204px;width:21px;height:1px;background:repeating-linear-gradient(90deg,#cdcdcd 0 1px,transparent 1px 2px)"></div>
<svg style="left:66px;top:198.29px;" width="13" height="11" viewBox="0 0 13 11"><path d="M0.8 10L12.2 1" stroke="#111" stroke-width="1.8" stroke-dasharray="4 1.2"/><circle cx="7.5" cy="4.8" r="1.6" fill="#fff" stroke="#111" stroke-width="0.9"/></svg>
<div class="t" style="left:83px;top:199.7528px;font-size:8.34px;color:#111;-webkit-text-stroke:0.22px #111">Граница отвода земель для ж/д и авто дор</div>
<div class="a" style="left:45px;top:215px;width:21px;height:1px;background:repeating-linear-gradient(90deg,#cdcdcd 0 1px,transparent 1px 2px)"></div>
<svg style="left:66px;top:209.89999999999998px;" width="13" height="11" viewBox="0 0 13 11"><path d="M0.8 10L12.2 1" stroke="#111" stroke-width="2.0" stroke-dasharray="3 1.5 1 1.5"/></svg>
<div class="t" style="left:83px;top:211.3628px;font-size:8.34px;color:#111;-webkit-text-stroke:0.22px #111">Условная граница территории проектируе</div>
<div class="a" style="left:45px;top:227px;width:21px;height:1px;background:repeating-linear-gradient(90deg,#cdcdcd 0 1px,transparent 1px 2px)"></div>
<svg style="left:66px;top:221.51px;" width="13" height="11" viewBox="0 0 13 11"><path d="M0.8 10L12.2 1" stroke="#111" stroke-width="1.5" /></svg>
<div class="t" style="left:83px;top:222.9728px;font-size:8.34px;color:#111;-webkit-text-stroke:0.22px #111">Красная линия</div>
<div class="a" style="left:45px;top:239px;width:21px;height:1px;background:repeating-linear-gradient(90deg,#cdcdcd 0 1px,transparent 1px 2px)"></div>
<svg style="left:66px;top:233.12px;" width="13" height="11" viewBox="0 0 13 11"><path d="M0.8 10L12.2 1" stroke="#111" stroke-width="1.4" stroke-dasharray="3 2.5"/></svg>
<div class="t" style="left:83px;top:234.58280000000002px;font-size:8.34px;color:#111;-webkit-text-stroke:0.22px #111">Граница регулирования застройки</div>
<div class="a" style="left:45px;top:250px;width:21px;height:1px;background:repeating-linear-gradient(90deg,#cdcdcd 0 1px,transparent 1px 2px)"></div>
<svg style="left:66px;top:244.73000000000002px;" width="13" height="11" viewBox="0 0 13 11"><path d="M0.8 10L12.2 1" stroke="#111" stroke-width="1.8" /><path d="M5.2 4.2L8.6 5.6L5.8 7.4Z" fill="#111"/></svg>
<div class="a" style="left:82px;top:244.73000000000002px;width:157px;height:11.5px;background:#e4e4e4"></div>
<div class="t" style="left:83px;top:246.19280000000003px;font-size:8.34px;color:#111;font-weight:bold;letter-spacing:0.12px;-webkit-text-stroke:0.15px #111">Граница зоны санитарной охраны</div>
<div class="a" style="left:45px;top:262px;width:21px;height:1px;background:repeating-linear-gradient(90deg,#cdcdcd 0 1px,transparent 1px 2px)"></div>
<svg style="left:66px;top:256.34px;" width="13" height="11" viewBox="0 0 13 11"><path d="M0.8 10L12.2 1" stroke="#111" stroke-width="2.2" /><path d="M5 9.5L12.5 3.6" stroke="#111" stroke-width="0.8"/></svg>
<div class="t" style="left:83px;top:257.8028px;font-size:8.34px;color:#111;-webkit-text-stroke:0.22px #111">Подпорная стенка в плане</div>
<div class="a" style="left:45px;top:273px;width:21px;height:1px;background:repeating-linear-gradient(90deg,#cdcdcd 0 1px,transparent 1px 2px)"></div>
<svg style="left:66px;top:267.95px;" width="13" height="11" viewBox="0 0 13 11"><path d="M0.8 10L12.2 1" stroke="#111" stroke-width="2.0" /><path d="M6 5L9.5 9" stroke="#111" stroke-width="1.4"/></svg>
<div class="t" style="left:83px;top:269.4128px;font-size:8.34px;color:#111;-webkit-text-stroke:0.22px #111">Контрбанкет, контрфорс</div>
<div class="a" style="left:45px;top:285px;width:21px;height:1px;background:repeating-linear-gradient(90deg,#cdcdcd 0 1px,transparent 1px 2px)"></div>
<svg style="left:66px;top:279.56px;" width="13" height="11" viewBox="0 0 13 11"><path d="M0.8 10L12.2 1" stroke="#111" stroke-width="1.6" /><circle cx="2" cy="9.2" r="1.4" fill="#fff" stroke="#111" stroke-width="0.9"/><path d="M6 5.5L9.5 5.5" stroke="#111" stroke-width="1"/></svg>
<div class="t" style="left:83px;top:281.0228px;font-size:8.34px;color:#111;-webkit-text-stroke:0.22px #111">Берегоукрепление, оврагоукрепление</div>
<div class="a" style="left:45px;top:297px;width:21px;height:1px;background:repeating-linear-gradient(90deg,#cdcdcd 0 1px,transparent 1px 2px)"></div>
<svg style="left:66px;top:291.17px;" width="13" height="11" viewBox="0 0 13 11"><path d="M0.8 10L12.2 1" stroke="#111" stroke-width="1.0" /><path d="M5.5 4.6L8.4 5.6L6 7.4Z" fill="#111"/></svg>
<div class="t" style="left:83px;top:292.63280000000003px;font-size:8.34px;color:#111;-webkit-text-stroke:0.22px #111">Лоток неукрепленный</div>
<div class="a" style="left:45px;top:308px;width:21px;height:1px;background:repeating-linear-gradient(90deg,#cdcdcd 0 1px,transparent 1px 2px)"></div>
<svg style="left:66px;top:302.78px;" width="13" height="11" viewBox="0 0 13 11"><path d="M0.8 10L12.2 1" stroke="#111" stroke-width="1.0" /><path d="M5.5 4.6L8.4 5.6L6 7.4Z" fill="#111"/><path d="M3.5 5L5.5 8.5" stroke="#111" stroke-width="0.9"/></svg>
<div class="t" style="left:83px;top:304.2428px;font-size:8.34px;color:#111;-webkit-text-stroke:0.22px #111">Лоток укрепленный</div>
<div class="a" style="left:45px;top:320px;width:21px;height:1px;background:repeating-linear-gradient(90deg,#cdcdcd 0 1px,transparent 1px 2px)"></div>
<svg style="left:66px;top:314.39px;" width="13" height="11" viewBox="0 0 13 11"><path d="M0.8 10L12.2 1" stroke="#111" stroke-width="1.0" /><path d="M0.8 6.5L9 0.5M4 10.5L12.5 4" stroke="#111" stroke-width="0.9"/><path d="M5.5 4.6L8.4 5.6L6 7.4Z" fill="#111"/></svg>
<div class="t" style="left:83px;top:315.8528px;font-size:8.34px;color:#111;-webkit-text-stroke:0.22px #111">Канал, канава, кювет неукрепленные</div>
<div class="a" style="left:45px;top:332px;width:21px;height:1px;background:repeating-linear-gradient(90deg,#cdcdcd 0 1px,transparent 1px 2px)"></div>
<svg style="left:66px;top:326.0px;" width="13" height="11" viewBox="0 0 13 11"><path d="M0.8 10L12.2 1" stroke="#111" stroke-width="1.0" /><path d="M0.8 6.5L9 0.5M4 10.5L12.5 4" stroke="#111" stroke-width="0.9"/><path d="M5.5 4.6L8.4 5.6L6 7.4Z" fill="#111"/></svg>
<div class="t" style="left:83px;top:327.4628px;font-size:8.34px;color:#111;-webkit-text-stroke:0.22px #111">Канал, канава, кювет укрепленные</div>
<div class="a" style="left:31px;top:343px;width:20px;height:1px;background:repeating-linear-gradient(90deg,#cdcdcd 0 1px,transparent 1px 2px)"></div>
<svg style="left:52px;top:337.61px;" width="12" height="11" viewBox="0 0 12 11"><rect x="0.5" y="0.5" width="11" height="10" fill="#dfe0ff"/><path d="M0.5 1.5H11.5M0.5 4H11.5M0.5 6.8H11.5M0.5 9.5H11.5M1.5 0.5V10.5M4.2 0.5V10.5M7 0.5V10.5M9.8 0.5V10.5" stroke="#2b2fd0" stroke-width="1"/></svg>
<div class="t" style="left:68px;top:339.07280000000003px;font-size:8.34px;color:#111;-webkit-text-stroke:0.22px #111">Создание стройсетки</div>
<div class="a" style="left:31px;top:355px;width:20px;height:1px;background:repeating-linear-gradient(90deg,#cdcdcd 0 1px,transparent 1px 2px)"></div>
<svg style="left:52px;top:349.21999999999997px;" width="12" height="11" viewBox="0 0 12 11"><path d="M5.5 0.5V10.5" stroke="#333" stroke-width="1"/><circle cx="5.5" cy="1.5" r="1" fill="#333"/><circle cx="5.5" cy="6" r="0.9" fill="#333"/></svg>
<div class="t" style="left:68px;top:350.6828px;font-size:8.34px;color:#111;-webkit-text-stroke:0.22px #111">Север</div>
<div class="a" style="left:31px;top:366px;width:20px;height:1px;background:repeating-linear-gradient(90deg,#cdcdcd 0 1px,transparent 1px 2px)"></div>
<svg style="left:52px;top:360.83px;" width="12" height="11" viewBox="0 0 12 11"><path d="M6 0.5V10.5M1 5.5H11M2.3 1.8L9.7 9.2M9.7 1.8L2.3 9.2" stroke="#222" stroke-width="1"/><circle cx="6" cy="5.5" r="1.6" fill="#222"/></svg>
<div class="t" style="left:68px;top:362.2928px;font-size:8.34px;color:#111;-webkit-text-stroke:0.22px #111">Роза ветров</div>
<div class="a" style="left:31px;top:378px;width:20px;height:1px;background:repeating-linear-gradient(90deg,#cdcdcd 0 1px,transparent 1px 2px)"></div>
<svg style="left:52px;top:372.44px;" width="12" height="11" viewBox="0 0 12 11"><path d="M0.8 1.5H11.2M0.8 1.5L2.3 0.4M0.8 1.5L2.3 2.6M11.2 1.5L9.7 0.4M11.2 1.5L9.7 2.6" stroke="#111" stroke-width="0.8" fill="none"/><rect x="1" y="4.5" width="10" height="5.8" fill="#fff" stroke="#111" stroke-width="1.2"/></svg>
<div class="t" style="left:68px;top:373.9028px;font-size:8.34px;color:#111;-webkit-text-stroke:0.22px #111">Простановка размеров</div>
<div class="a" style="left:31px;top:390px;width:20px;height:1px;background:repeating-linear-gradient(90deg,#cdcdcd 0 1px,transparent 1px 2px)"></div>
<svg style="left:52px;top:384.05px;" width="12" height="11" viewBox="0 0 12 11"><path d="M1 0.5V6Q1 10 5 10H11" fill="none" stroke="#111" stroke-width="1.1"/><path d="M4.5 6.5L8 3" stroke="#111" stroke-width="0.9"/><path d="M7.5 0.5V4.5M7.5 0.8H9.5V2.5H7.5L9.8 4.6" stroke="#111" stroke-width="0.8" fill="none"/></svg>
<div class="t" style="left:68px;top:385.5128px;font-size:8.34px;color:#111;-webkit-text-stroke:0.22px #111">Простановка радиусов</div>
<div class="a" style="left:31px;top:401px;width:20px;height:1px;background:repeating-linear-gradient(90deg,#cdcdcd 0 1px,transparent 1px 2px)"></div>
<svg style="left:52px;top:395.66px;" width="12" height="11" viewBox="0 0 12 11"><path d="M1 0.5V5Q1 10 6 10H11" fill="none" stroke="#111" stroke-width="1.1"/><path d="M5 2H10.5V5.5H7.5" stroke="#111" stroke-width="1" fill="none"/></svg>
<div class="t" style="left:68px;top:397.12280000000004px;font-size:8.34px;color:#111;-webkit-text-stroke:0.22px #111">Простановка диаметров зданий</div>
<div class="a" style="left:31px;top:413px;width:20px;height:1px;background:repeating-linear-gradient(90deg,#cdcdcd 0 1px,transparent 1px 2px)"></div>
<svg style="left:52px;top:407.27px;" width="12" height="11" viewBox="0 0 12 11"><rect x="0.7" y="6.5" width="3.6" height="3.6" fill="#fff" stroke="#111" stroke-width="1.1"/><path d="M3.5 6.5L7 3H11" stroke="#111" stroke-width="1" fill="none"/><path d="M9 1.2L11.5 3L9 4.8" stroke="#111" stroke-width="0.9" fill="none"/></svg>
<div class="t" style="left:68px;top:408.7328px;font-size:8.34px;color:#111;-webkit-text-stroke:0.22px #111">Простановка координат</div>
<div class="a" style="left:31px;top:424px;width:20px;height:1px;background:repeating-linear-gradient(90deg,#cdcdcd 0 1px,transparent 1px 2px)"></div>
<svg style="left:52px;top:418.88px;" width="12" height="11" viewBox="0 0 12 11"><path d="M1 0.8H8L11 3.8V10.2H1Z" fill="#fff" stroke="#111" stroke-width="1.2"/><rect x="5" y="6" width="5.5" height="3.8" fill="#111"/></svg>
<div class="t" style="left:68px;top:420.3428px;font-size:8.34px;color:#111;-webkit-text-stroke:0.22px #111">Оформление горизонтальной планировки</div>
<div class="a" style="left:34px;top:436px;width:5px;height:1px;background:repeating-linear-gradient(90deg,#cdcdcd 0 1px,transparent 1px 2px)"></div>
<svg style="left:26.5px;top:432.49px;" width="7" height="7" viewBox="0 0 7 7"><rect x="0.5" y="0.5" width="6" height="6" fill="#fff" stroke="#777" stroke-width="1"/><path d="M1.8 3.5H5.2" stroke="#111" stroke-width="1"/><path d="M3.5 1.8V5.2" stroke="#111" stroke-width="1"/></svg>
<svg style="left:39px;top:431.49px;" width="12" height="9" viewBox="0 0 12 9"><path d="M0.5 1.2H4L5 2.2H10.5V8.6H0.5Z" fill="#f1ee74" stroke="#4a4a3a" stroke-width="1"/><path d="M0.5 3.4H10.5" stroke="#8a8540" stroke-width="0.6"/></svg>
<div class="t" style="left:54px;top:431.9528px;font-size:8.34px;color:#111;-webkit-text-stroke:0.22px #111">Вертикальная планировка</div>
<div class="a" style="left:34px;top:448px;width:5px;height:1px;background:repeating-linear-gradient(90deg,#cdcdcd 0 1px,transparent 1px 2px)"></div>
<svg style="left:26.5px;top:444.09999999999997px;" width="7" height="7" viewBox="0 0 7 7"><rect x="0.5" y="0.5" width="6" height="6" fill="#fff" stroke="#777" stroke-width="1"/><path d="M1.8 3.5H5.2" stroke="#111" stroke-width="1"/><path d="M3.5 1.8V5.2" stroke="#111" stroke-width="1"/></svg>
<svg style="left:39px;top:443.09999999999997px;" width="12" height="9" viewBox="0 0 12 9"><path d="M0.5 1.2H4L5 2.2H10.5V8.6H0.5Z" fill="#f1ee74" stroke="#4a4a3a" stroke-width="1"/><path d="M0.5 3.4H10.5" stroke="#8a8540" stroke-width="0.6"/></svg>
<div class="t" style="left:54px;top:443.5628px;font-size:8.34px;color:#111;-webkit-text-stroke:0.22px #111">Благоустройство</div>
</div></div>
<div class="a" style="left:248px;top:90px;width:14px;height:45.5px;background:#727272;border-radius:0 4px 4px 0"></div>
<div class="t" style="left:254.8px;top:113px;font-size:8.1px;color:#e2e2e2;font-weight:normal;transform:translate(-50%,-50%) rotate(-90deg)">GeoniCS</div>
<div class="a" style="left:248px;top:136.5px;width:14px;height:47.5px;background:#727272;border-radius:0 4px 4px 0"></div>
<div class="t" style="left:254.8px;top:160.5px;font-size:8.1px;color:#e2e2e2;font-weight:normal;transform:translate(-50%,-50%) rotate(-90deg)">Ситуация</div>
<div class="a" style="left:248px;top:185px;width:14px;height:46px;background:#727272;border-radius:0 4px 4px 0"></div>
<div class="t" style="left:254.8px;top:208px;font-size:8.1px;color:#e2e2e2;font-weight:normal;transform:translate(-50%,-50%) rotate(-90deg)">Рельеф</div>
<div class="a" style="left:247px;top:231px;width:15px;height:47px;background:#fefefe;border-radius:0 3px 3px 0"></div>
<div class="t" style="left:254.8px;top:254px;font-size:7.9px;color:#111;font-weight:bold;transform:translate(-50%,-50%) rotate(-90deg)">Генплан</div>
<div class="a" style="left:248px;top:279px;width:14px;height:48.5px;background:#727272;border-radius:0 4px 4px 0"></div>
<div class="t" style="left:254.8px;top:301px;font-size:8.1px;color:#e2e2e2;font-weight:normal;transform:translate(-50%,-50%) rotate(-90deg)">Утилиты</div>
<svg style="left:268px;top:77px;" width="74" height="14" viewBox="0 0 74 14"><path d="M0 14C6 13 6 1 13 1H70Q72 1 72 3V14Z" fill="#fdfeff"/></svg>
<div class="t" style="left:284.5px;top:79.7px;font-size:8.6px;color:#1b1b1b;font-weight:bold">Untitled0*</div>
<svg style="left:329.5px;top:81px;" width="7" height="7" viewBox="0 0 7 7"><path d="M0.8 0.8L6.2 6.2M6.2 0.8L0.8 6.2" stroke="#333" stroke-width="1.1"/></svg>
<svg style="left:928px;top:80px;" width="8" height="5" viewBox="0 0 8 5"><path d="M0.5 0.5H7.5L4 4.5Z" fill="#5a6a82"/></svg>
<div class="a" style="left:266px;top:89.5px;width:673px;height:514px;background:#f1f6fd"></div>
<div class="a" style="left:268px;top:90.8px;width:655px;height:494.7px;background:#999;border-top:2px solid #6b6b6b;border-left:2px solid #7a7a7a"></div>
<div class="a" style="left:923px;top:90px;width:14.5px;height:497px;background:#f5f5f3"></div>
<div class="a" style="left:924px;top:264px;width:13px;height:308px;background:linear-gradient(90deg,#f8f8f8,#e0e0e0);border:1px solid #b5b5b5;border-radius:3px"></div>
<div class="a" style="left:924px;top:91px;width:13px;height:12.5px;background:#ececec;border:1px solid #a8a8a8;border-radius:2px"></div>
<div class="a" style="left:924px;top:573.5px;width:13px;height:12.5px;background:#ececec;border:1px solid #a8a8a8;border-radius:2px"></div>
<svg style="left:927px;top:94.5px;" width="7" height="6" viewBox="0 0 7 6"><path d="M0.8 4.8L3.5 1.6L6.2 4.8" stroke="#222" stroke-width="1.9" fill="none"/></svg>
<svg style="left:927px;top:577px;" width="7" height="6" viewBox="0 0 7 6"><path d="M0.8 1.2L3.5 4.4L6.2 1.2" stroke="#222" stroke-width="1.9" fill="none"/></svg>
<div class="a" style="left:927.5px;top:416px;width:6px;height:5px;background:repeating-linear-gradient(#777 0 1px,transparent 1px 2px)"></div>
<div class="a" style="left:268px;top:585.5px;width:317px;height:14.5px;background:#e3e3e1;border-top:1px solid #6e6e6e;border-left:2px solid #7a7a7a"></div>
<div class="a" style="left:585px;top:586.5px;width:352.5px;height:13.5px;background:#f8f8f6"></div>
<div class="a" style="left:271px;top:588.5px;width:12.5px;height:11.5px;background:#ececec;border:1px solid #a8a8a8;border-radius:2px"></div>
<div class="a" style="left:285px;top:588.5px;width:12.5px;height:11.5px;background:#ececec;border:1px solid #a8a8a8;border-radius:2px"></div>
<svg style="left:274px;top:590.5px;" width="6" height="7" viewBox="0 0 6 7"><path d="M4.5 0.8L1.5 3.5L4.5 6.2" stroke="#222" stroke-width="1.8" fill="none"/></svg>
<svg style="left:288.5px;top:590.5px;" width="6" height="7" viewBox="0 0 6 7"><path d="M1.5 0.8L4.5 3.5L1.5 6.2" stroke="#222" stroke-width="1.8" fill="none"/></svg>
<svg style="left:296px;top:586px;" width="130" height="14" viewBox="0 0 130 14"><path d="M0.5 0.5L6.5 13.5H35.5L40.5 0.5" fill="#fff" stroke="#555" stroke-width="1"/><path d="M40.5 0.5L35.5 13.5M41 13.5H76L82 0.5M78 13.5H119L125 0.5" fill="none" stroke="#555" stroke-width="1"/></svg>
<div class="t" style="left:303.7px;top:589.3px;font-size:8.6px;color:#111;font-weight:bold;letter-spacing:-0.1px">Model</div>
<div class="t" style="left:340.8px;top:589.5px;font-size:8.3px;color:#222;letter-spacing:-0.1px">Layout1</div>
<div class="t" style="left:383px;top:589.5px;font-size:8.3px;color:#222;letter-spacing:-0.1px">Layout2</div>
<div class="a" style="left:585px;top:586.5px;width:3px;height:13.5px;background:#ddd;border-left:1.5px solid #666;border-right:1px solid #aaa"></div>
<div class="a" style="left:589px;top:587.5px;width:12.5px;height:12px;background:#ececec;border:1px solid #a8a8a8;border-radius:2px"></div>
<svg style="left:592px;top:590px;" width="6" height="7" viewBox="0 0 6 7"><path d="M4.5 0.8L1.5 3.5L4.5 6.2" stroke="#222" stroke-width="1.8" fill="none"/></svg>
<div class="a" style="left:909.5px;top:587.5px;width:13px;height:12px;background:#ececec;border:1px solid #a8a8a8;border-radius:2px"></div>
<svg style="left:913.5px;top:590px;" width="6" height="7" viewBox="0 0 6 7"><path d="M1.5 0.8L4.5 3.5L1.5 6.2" stroke="#222" stroke-width="1.8" fill="none"/></svg>
<div class="a" style="left:693.5px;top:587.5px;width:214px;height:12px;background:linear-gradient(#fdfdfd,#e2e2e2);border:1px solid #b5b5b5;border-radius:3px"></div>
<div class="a" style="left:798px;top:591px;width:5px;height:5px;background:repeating-linear-gradient(90deg,#777 0 1px,transparent 1px 2px)"></div>
<svg style="left:927px;top:589px;" width="10" height="10" viewBox="0 0 10 10"><path d="M9.5 1L1 9.5M9.5 4L4 9.5M9.5 7L7 9.5" stroke="#8a8a7a" stroke-width="1"/></svg>
<svg style="left:0px;top:0px;" width="960" height="720" viewBox="0 0 960 720"><g fill="none" stroke="#0b0b0b" stroke-width="2.9" stroke-linecap="butt" stroke-linejoin="miter"><path d="M360 211L526.5 189.7L581.7 299.1A101.3 101.3 0 0 0 761.3 302"/></g><polygon points="371.4,204.8 378.1,213.4 367.1,214.8" fill="#0b0b0b"/><polygon points="450.4,194.7 457.1,203.3 446.1,204.7" fill="#0b0b0b"/><polygon points="532.8,192.2 526.9,201.3 521.9,191.5" fill="#0b0b0b"/><polygon points="567.6,261.5 561.7,270.6 556.7,260.8" fill="#0b0b0b"/><polygon points="607.3,325.1 605.1,335.7 597.0,328.4" fill="#0b0b0b"/><polygon points="676.1,349.9 682.0,359.1 671.0,359.5" fill="#0b0b0b"/><polygon points="742.4,319.7 753.0,322.1 745.5,330.1" fill="#0b0b0b"/><path d="M657 200.8H709M683 176.5V227" stroke="#a4a4a4" stroke-width="3.6"/><path d="M657 200.8H709M683 176.5V227" stroke="#5e5e5e" stroke-width="1.6"/><rect x="679.8" y="197.6" width="6.4" height="6.4" fill="#a0a0a0" stroke="#484848" stroke-width="1.3"/><path d="M683 198V204M680 200.8H686" stroke="#6a6a6a" stroke-width="1"/><g stroke="#464646" stroke-width="1.5" fill="none"><rect x="292" y="550" width="14" height="14"/><path d="M299 550V504M306 557H352"/><path d="M299 487L293.5 504H304.5Z M370 557L353 552V562Z"/></g><text x="298.7" y="480.3" text-anchor="middle" font-family="DejaVu Sans Light,DejaVu Sans,Liberation Sans,sans-serif" font-weight="200" font-size="19.5" fill="#585858">Y</text><text x="386" y="562.6" text-anchor="middle" font-family="DejaVu Sans Light,DejaVu Sans,Liberation Sans,sans-serif" font-weight="200" font-size="14.5" fill="#7a7a7a" transform="translate(386 0) scale(1.25 1) translate(-386 0)">X</text></svg>
<div class="a" style="left:942px;top:76px;width:18px;height:250px;background:linear-gradient(90deg,#c9dcf5,#d9e6f8 50%,#cfe0f6);border-radius:0 0 0 3px"></div>
<div class="a" style="left:945px;top:78px;width:12px;height:2px;background:repeating-linear-gradient(90deg,#8fa9cf 0 1px,transparent 1px 3px)"></div>
<svg style="left:944.5px;top:84.5px;" width="12" height="11" viewBox="0 0 12 11"><path d="M1.6 1.4L10 9.4M10 1.4L1.6 9.4" stroke="#7a1010" stroke-width="3.4" stroke-linecap="round"/><path d="M1.6 1.4L10 9.4M10 1.4L1.6 9.4" stroke="#c41c1c" stroke-width="2.2" stroke-linecap="round"/></svg>
<svg style="left:944px;top:102px;" width="13" height="12" viewBox="0 0 13 12"><path d="M6.5 0.5L8.6 3H4.4ZM6.5 11.5L8.6 9H4.4ZM0.5 6L3 3.9V8.1ZM12.5 6L10 3.9V8.1Z" fill="#33506e"/><path d="M6.5 2.5V9.5M2.5 6H10.5" stroke="#33506e" stroke-width="1.1" stroke-dasharray="1.5 1"/></svg>
<svg style="left:944px;top:118px;" width="13" height="12" viewBox="0 0 13 12"><path d="M0.8 10.5L5 2V10.5Z" fill="#4a90c8" stroke="#2f6a9a" stroke-width="0.8"/><path d="M12.2 10.5L8 1V10.5Z" fill="#5aa0d2" stroke="#2f6a9a" stroke-width="0.8"/><path d="M6.5 0.5V11.5" stroke="#2f5f8a" stroke-width="0.9" stroke-dasharray="1.6 1"/></svg>
<svg style="left:944px;top:134.5px;" width="13" height="12" viewBox="0 0 13 12"><rect x="0.8" y="0.8" width="11.4" height="10.4" fill="#dfeaf4" stroke="#2b3a4e" stroke-width="1.5"/><path d="M3 11V7Q3 4 6.5 4H12" fill="none" stroke="#2f8a9a" stroke-width="1.5"/></svg>
<svg style="left:945px;top:152px;" width="12" height="12" viewBox="0 0 12 12"><path d="M8.8 2.2A4.6 4.6 0 1 0 10.6 6" fill="none" stroke="#34465c" stroke-width="2"/><path d="M6.8 0.3L11 1.8L8 4.6Z" fill="#34465c"/></svg>
<svg style="left:944px;top:168.5px;" width="13" height="12" viewBox="0 0 13 12"><path d="M1 6L5.5 1.5L8 4V11H3.5V7.5Z" fill="#3f566e"/><rect x="8" y="5" width="4.2" height="6" fill="#5a7a9a" stroke="#2f4660" stroke-width="0.8"/></svg>
<svg style="left:944px;top:184px;" width="13" height="13" viewBox="0 0 13 13"><path d="M2 1V11M11 1V12" stroke="#2f4660" stroke-width="1.5"/><circle cx="2" cy="2" r="1.2" fill="#2f4660"/><circle cx="2" cy="11" r="1.2" fill="#2f4660"/><path d="M4 6.5H9.5" stroke="#4a90c8" stroke-width="1.3"/><path d="M7.2 4.5L9.8 6.5L7.2 8.5Z" fill="#4a90c8"/></svg>
<svg style="left:944px;top:201px;" width="13" height="12" viewBox="0 0 13 12"><path d="M1 11L11.5 1.5V5L5 11Z" fill="#3f566e"/><path d="M6.5 11L12 6V9.5L10 11Z" fill="#5a8aa8"/><path d="M0.5 8L8 0.8" stroke="#7aa8c8" stroke-width="1.2"/></svg>
<div class="a" style="left:944px;top:218px;width:14px;height:1px;background:#aec4e2;box-shadow:0 1px 0 #e6effb"></div>
<svg style="left:944px;top:224px;" width="13" height="12" viewBox="0 0 13 12"><path d="M1.5 9.5L9.5 1.5" stroke="#3f4852" stroke-width="1.3"/><path d="M3 3L8 8" stroke="#c03a3a" stroke-width="1.3"/><path d="M6 1V11" stroke="#6a8ab0" stroke-width="0.9" stroke-dasharray="1.5 1"/></svg>
<svg style="left:944px;top:240px;" width="13" height="13" viewBox="0 0 13 13"><path d="M2.5 1V12M10.5 1V12" stroke="#3f566e" stroke-width="1.3" stroke-dasharray="2 1.2"/><path d="M2.5 6.5H10.5" stroke="#4a90c8" stroke-width="1.2"/><path d="M5 5L2.8 6.5L5 8ZM8 5L10.2 6.5L8 8Z" fill="#4a90c8"/></svg>
<svg style="left:944px;top:258px;" width="13" height="12" viewBox="0 0 13 12"><path d="M1.5 10.5L11.5 1.5" stroke="#3f566e" stroke-width="1.3" stroke-dasharray="3 1.5"/><circle cx="1.8" cy="10.2" r="1.1" fill="#3f566e"/><circle cx="11.2" cy="1.8" r="1.1" fill="#3f566e"/></svg>
<svg style="left:944px;top:275px;" width="13" height="10" viewBox="0 0 13 10"><path d="M1 2.5L12 6.5" stroke="#3f566e" stroke-width="1.1"/><path d="M8.5 1V9.5" stroke="#6a8ab0" stroke-width="1"/></svg>
<svg style="left:944px;top:290px;" width="14" height="12" viewBox="0 0 14 12"><path d="M1 4H4V1.5H10V4H13V8.5H10V11H4V8.5H1Z" fill="#e6eef7" stroke="#3f4852" stroke-width="1.2"/><path d="M4 6H10" stroke="#3f4852" stroke-width="0.9"/></svg>
<div class="a" style="left:944px;top:306px;width:14px;height:1px;background:#aec4e2;box-shadow:0 1px 0 #e6effb"></div>
<svg style="left:944px;top:310px;" width="13" height="13" viewBox="0 0 13 13"><circle cx="6" cy="8" r="4.6" fill="#23262c"/><circle cx="4.5" cy="6.5" r="1.3" fill="#6a7078"/><path d="M8.5 4.5L10.5 2.5" stroke="#6a4a2a" stroke-width="1.3"/><circle cx="11" cy="2" r="1.6" fill="#e04a2a"/><circle cx="11" cy="2" r="0.7" fill="#f7d84a"/></svg>
<div class="a" style="left:20px;top:605px;width:921px;height:17.5px;background:linear-gradient(#c0d9fa,#cbdaee 35%,#d0dcec)"></div>
<div class="t w" style="left:23px;top:611px;font-size:7.5px;color:#2c4874;-webkit-text-stroke:0.3px #2c4874">Command Line</div>
<svg style="left:918.3px;top:611.5px;" width="5" height="6.5" viewBox="0 0 6 8"><path d="M1.2 0.8H4.8M1.7 0.8V4.5M4.3 0.8V4.5M0.3 4.8H5.7M3 5V7.8" stroke="#44546e" stroke-width="1.2" fill="none"/></svg>
<svg style="left:930px;top:612px;" width="6.5" height="5.5" viewBox="0 0 8 7"><path d="M1 0.5L7 6.5M7 0.5L1 6.5" stroke="#3a4a66" stroke-width="1.5"/></svg>
<div class="a" style="left:20px;top:621.5px;width:919px;height:70px;background:#fff;border:1.5px solid #555;border-right-color:#999;border-bottom-color:#666"></div>
<div class="t m" style="left:22px;top:625.3px;font-size:9.6px;color:#111;letter-spacing:0.24px">Код по классификатору [Выбрать/] &lt;A_GRANICA_SANITARNAYA&gt;:  "A_GRANICA_SANITARNAYA"</div>
<div class="t m" style="left:22px;top:634.77px;font-size:9.6px;color:#111;letter-spacing:0.24px">Топознак: A_GRANICA_SANITARNAYA - Граница зоны санитарной охраны</div>
<div class="t m" style="left:22px;top:644.24px;font-size:9.6px;color:#111;letter-spacing:0.24px">Укажите следующую точку [Дуга/длИна/Трассирование/]: Трассирование</div>
<div class="t m" style="left:22px;top:653.7099999999999px;font-size:9.6px;color:#111;letter-spacing:0.24px">*cancel*</div>
<div class="t m" style="left:22px;top:672.65px;font-size:9.6px;color:#111;letter-spacing:0.24px">ОТМЕНИТЬ.U.UNDO - &amp;Undo</div>
<div class="a" style="left:926.5px;top:623px;width:12px;height:67.5px;background:#f5f5f3"></div>
<div class="a" style="left:926.5px;top:623.5px;width:12px;height:12px;background:#ececec;border:1px solid #a8a8a8;border-radius:2px"></div>
<div class="a" style="left:926.5px;top:676.5px;width:12px;height:12px;background:#ececec;border:1px solid #a8a8a8;border-radius:2px"></div>
<div class="a" style="left:926.5px;top:670.5px;width:12px;height:5.5px;background:#e8e8e8;border:1px solid #aaa;border-radius:2px"></div>
<svg style="left:929px;top:626.5px;" width="7" height="6" viewBox="0 0 7 6"><path d="M0.8 4.8L3.5 1.6L6.2 4.8" stroke="#222" stroke-width="1.9" fill="none"/></svg>
<svg style="left:929px;top:679.5px;" width="7" height="6" viewBox="0 0 7 6"><path d="M0.8 1.2L3.5 4.4L6.2 1.2" stroke="#222" stroke-width="1.9" fill="none"/></svg>
<div class="a" style="left:20px;top:691.5px;width:921px;height:11px;background:#f5f8fd"></div>
<div class="t m" style="left:20px;top:692.3px;font-size:9.6px;color:#111;letter-spacing:0.24px">Command:</div>
<div class="a" style="left:0px;top:702px;width:960px;height:18px;background:linear-gradient(#8e9db4 0 1px,#d6e4f8 1px,#c2d8f6 45%,#b7d0f2)"></div>
<div class="t u" style="left:2.8px;top:708.3px;font-size:7.7px;color:#2a4670;-webkit-text-stroke:0.15px #2a4670">265.28,291.61,0</div>
<div class="a" style="left:161px;top:704.3px;width:27px;height:14.7px;background:linear-gradient(#f6f9fe,#e6eef9);border:1px solid #8592a6;border-radius:2px"></div>
<div class="t u" style="left:174.5px;top:707.7px;font-size:8.2px;color:#2a2f38;transform:translateX(-50%);-webkit-text-stroke:0.3px #2a2f38;letter-spacing:-0.15px">SNAP</div>
<div class="a" style="left:189.5px;top:704.3px;width:25.5px;height:14.7px;background:linear-gradient(#f6f9fe,#e6eef9);border:1px solid #8592a6;border-radius:2px"></div>
<div class="t u" style="left:202.25px;top:707.7px;font-size:8.2px;color:#2a2f38;transform:translateX(-50%);-webkit-text-stroke:0.3px #2a2f38;letter-spacing:-0.15px">GRID</div>
<div class="a" style="left:216px;top:704.3px;width:33.5px;height:14.7px;background:linear-gradient(#fbe3b6,#f6cd84 50%,#f3c069);border:1px solid #a88a52;border-radius:2px"></div>
<div class="t u" style="left:232.75px;top:707.7px;font-size:8.2px;color:#4f3a12;transform:translateX(-50%);-webkit-text-stroke:0.3px #4f3a12;letter-spacing:-0.15px">OSNAP</div>
<div class="a" style="left:250px;top:704.3px;width:38.5px;height:14.7px;background:linear-gradient(#fbe3b6,#f6cd84 50%,#f3c069);border:1px solid #a88a52;border-radius:2px"></div>
<div class="t u" style="left:269.25px;top:707.7px;font-size:8.2px;color:#4f3a12;transform:translateX(-50%);-webkit-text-stroke:0.3px #4f3a12;letter-spacing:-0.15px">OTRACK</div>
<div class="a" style="left:289px;top:704.3px;width:31.5px;height:14.7px;background:linear-gradient(#fbe3b6,#f6cd84 50%,#f3c069);border:1px solid #a88a52;border-radius:2px"></div>
<div class="t u" style="left:304.75px;top:707.7px;font-size:8.2px;color:#4f3a12;transform:translateX(-50%);-webkit-text-stroke:0.3px #4f3a12;letter-spacing:-0.15px">POLAR</div>
<div class="a" style="left:321px;top:704.3px;width:34.5px;height:14.7px;background:linear-gradient(#f6f9fe,#e6eef9);border:1px solid #8592a6;border-radius:2px"></div>
<div class="t u" style="left:338.25px;top:707.7px;font-size:8.2px;color:#2a2f38;transform:translateX(-50%);-webkit-text-stroke:0.3px #2a2f38;letter-spacing:-0.15px">ORTHO</div>
<div class="a" style="left:357px;top:704.3px;width:19.5px;height:14.7px;background:linear-gradient(#f6f9fe,#e6eef9);border:1px solid #8592a6;border-radius:2px"></div>
<div class="t u" style="left:366.75px;top:707.7px;font-size:8.2px;color:#2a2f38;transform:translateX(-50%);-webkit-text-stroke:0.3px #2a2f38;letter-spacing:-0.15px">SW</div>
<div class="a" style="left:378px;top:704.3px;width:17.5px;height:14.7px;background:linear-gradient(#fbe3b6,#f6cd84 50%,#f3c069);border:1px solid #a88a52;border-radius:2px"></div>
<div class="t u" style="left:386.75px;top:707.7px;font-size:8.2px;color:#4f3a12;transform:translateX(-50%);-webkit-text-stroke:0.3px #4f3a12;letter-spacing:-0.15px">SH</div>
<div class="a" style="left:798.5px;top:703px;width:18.5px;height:17px;border:1px solid #7a8aa0;border-bottom:none;background:#cfe0f5"></div>
<div class="a" style="left:800.5px;top:705px;width:15.0px;height:15px;background:#3f97da;border:1px solid #2a3f5a;border-radius:1.5px"></div>
<svg style="left:802px;top:707px;" width="12" height="12" viewBox="0 0 12 12"><path d="M1.5 11.5V6.5Q1.5 1.5 7 1.5H11.5" fill="none" stroke="#bfe2fb" stroke-width="1.8"/><path d="M5 11.5V8Q5 5 8 5H11.5" fill="none" stroke="#9ad0f5" stroke-width="1.3"/></svg>
<div class="a" style="left:818.5px;top:705px;width:16.0px;height:15px;background:#e6ebf2;border:1px solid #5a6678;border-radius:1.5px"></div>
<svg style="left:820.5px;top:707px;" width="12" height="12" viewBox="0 0 12 12"><rect x="1" y="1.5" width="10" height="9" fill="#9aa6b4" stroke="#4a5565" stroke-width="1"/><path d="M2 10L10 2.5M2 5.5L6 10" stroke="#e8eef5" stroke-width="0.9"/></svg>
<div class="a" style="left:836px;top:705px;width:51px;height:15px;background:linear-gradient(#f4f8fd,#dce7f5);border:1px solid #a3b4cc"></div>
<div class="t u" style="left:861px;top:708.2px;font-size:8.2px;color:#333;font-weight:bold;transform:translateX(-50%)">M1:1</div>
<div class="a" style="left:889px;top:705px;width:15.5px;height:15px;background:#eef1f5;border:1px solid #5a6678;border-radius:1.5px"></div>
<svg style="left:891px;top:707px;" width="12" height="12" viewBox="0 0 12 12"><path d="M2 3Q5 0.5 8 3Q11 5 9 8L7 11H3Q0.5 7 2 3Z" fill="#8a5a52" stroke="#4a3a3a" stroke-width="0.8"/><path d="M6 6L11 10" stroke="#333" stroke-width="1.3"/></svg>
<div class="a" style="left:907.5px;top:705px;width:15.0px;height:15px;background:#eef1f5;border:1px solid #5a6678;border-radius:1.5px"></div>
<svg style="left:909.5px;top:707px;" width="12" height="12" viewBox="0 0 12 12"><circle cx="6" cy="6" r="4" fill="#f8fafc" stroke="#3a444e" stroke-width="1.5"/><path d="M1 1H3M9 1H11M1 11H3M9 11H11" stroke="#3a444e" stroke-width="1.3"/></svg>
<div class="a" style="left:925.5px;top:705px;width:15.0px;height:15px;background:#eef1f5;border:1px solid #5a6678;border-radius:1.5px"></div>
<svg style="left:927.5px;top:707px;" width="12" height="12" viewBox="0 0 12 12"><path d="M2.5 5Q3 2.5 6 2.5H9M9.5 7Q9 9.5 6 9.5H3" fill="none" stroke="#2f8a4a" stroke-width="1.6"/><path d="M8 0.8L10.8 2.6L8 4.4ZM4 7.6L1.2 9.4L4 11.2Z" fill="#2f8a4a"/></svg>
<div class="a" style="left:943px;top:705px;width:15px;height:15px;background:#eef1f5;border:1px solid #8a4a4a;border-radius:1.5px"></div>
<svg style="left:945px;top:707px;" width="12" height="12" viewBox="0 0 12 12"><rect x="1" y="2.5" width="10" height="7.5" fill="#3f8fd0" stroke="#1f4f8a" stroke-width="1.2"/><rect x="3.5" y="4.5" width="5" height="3.5" fill="#9fd0f2"/></svg>
</body></html>
